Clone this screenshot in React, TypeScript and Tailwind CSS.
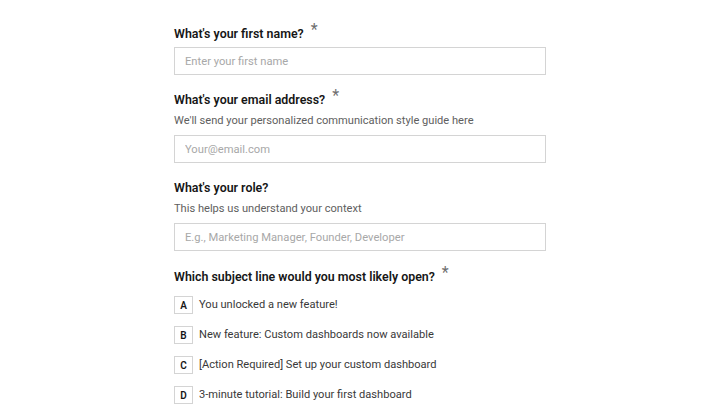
import React from "react";

const font = { fontFamily: 'Roboto, "Noto Sans", sans-serif' };

function Label({ text, required }: { text: string; required?: boolean }) {
    return (
        <label className="flex h-5 items-center text-[12.4px] font-semibold leading-5 text-[#161616]">
            {text}
            {required && <span className="ml-[7px] -mt-[8px] text-[16px] font-normal text-[#6f6f6f]">*</span>}
        </label>
    );
}

function Field({
    label,
    hint,
    placeholder,
    required,
}: {
    label: string;
    hint?: string;
    placeholder: string;
    required?: boolean;
}) {
    return (
        <div className="flex flex-col">
            <Label text={label} required={required} />
            {hint && <p className="mt-[2px] h-[18px] text-[11.1px] leading-[18px] text-[#5e5e5e]">{hint}</p>}
            <input
                placeholder={placeholder}
                className={`${hint ? "mt-[5px]" : "mt-[3px]"} h-[28px] w-full border border-[#d4d4d4] bg-white px-[10px] text-[11.2px] text-[#161616] outline-none placeholder:text-[#a8a8a8]`}
            />
        </div>
    );
}

const options = [
    { key: "A", text: "You unlocked a new feature!" },
    { key: "B", text: "New feature: Custom dashboards now available" },
    { key: "C", text: "[Action Required] Set up your custom dashboard" },
    { key: "D", text: "3-minute tutorial: Build your first dashboard" },
];

export default function App() {
    return (
        <main className="min-h-screen bg-white" style={font}>
            <form className="mx-auto flex w-[372px] flex-col gap-[15px] pt-[24px]">
                <Field label="What's your first name?" placeholder="Enter your first name" required />
                <Field
                    label="What's your email address?"
                    hint="We'll send your personalized communication style guide here"
                    placeholder="Your@email.com"
                    required
                />
                <Field
                    label="What's your role?"
                    hint="This helps us understand your context"
                    placeholder="E.g., Marketing Manager, Founder, Developer"
                />
                <div className="mt-[1px] flex flex-col">
                    <Label text="Which subject line would you most likely open?" required />
                    <div className="mt-[9px] flex flex-col gap-[12px]">
                        {options.map((o) => (
                            <button key={o.key} type="button" className="flex items-center gap-[6px] text-left">
                                <span className="flex h-[18px] w-[19px] items-center justify-center border border-[#d4d4d4] text-[10px] font-semibold text-[#161616]">
                                    {o.key}
                                </span>
                                <span className="text-[11.1px] leading-[18px] text-[#393939]">{o.text}</span>
                            </button>
                        ))}
                    </div>
                </div>
            </form>
        </main>
    );
}
